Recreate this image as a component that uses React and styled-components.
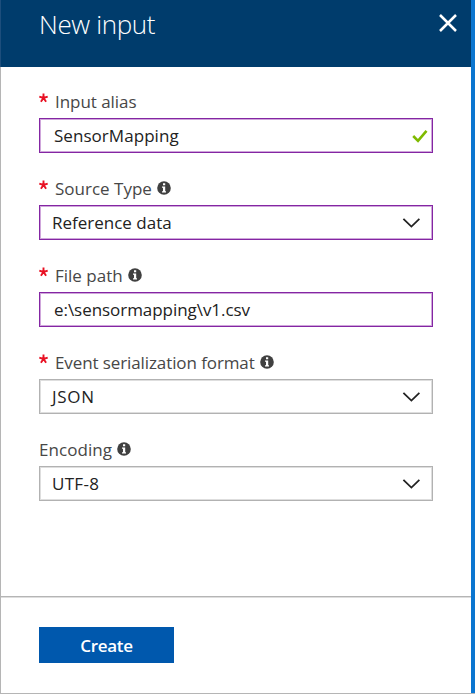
import React from "react";
import styled, { createGlobalStyle } from "styled-components";

const GlobalStyle = createGlobalStyle`
  * { box-sizing: border-box; }
  body {
    margin: 0;
    background: #fff;
    font-family: "Open Sans", "Noto Sans", sans-serif;
  }
`;

const Frame = styled.main`
  height: 694px;
  border-bottom: 1px solid #b5b5b5;
`;

const Blade = styled.section`
  display: flex;
  flex-direction: column;
  height: 693px;
  border-right: 4px solid #0b76d0;
  background: #fff;
`;

const Header = styled.header`
  display: flex;
  flex: none;
  justify-content: space-between;
  align-items: flex-start;
  height: 67px;
  padding: 6px 13px 0 38px;
  border-left: 1px solid #1d4e7c;
  background: #003c6c;
  color: #fff;
`;

const Title = styled.h1`
  margin: 0;
  font-size: 26px;
  line-height: 36px;
  font-weight: 300;
  letter-spacing: -0.35px;
`;

const CloseButton = styled.button`
  display: flex;
  margin: 7px 0 0;
  padding: 0;
  border: 0;
  background: none;
`;

const Form = styled.form`
  display: flex;
  flex: 1;
  flex-direction: column;
  border-left: 1px solid #b5b5b5;
`;

const Fields = styled.div`
  display: flex;
  flex: 1;
  flex-direction: column;
  gap: 17px;
  padding: 16px 38px 0;
`;

const Field = styled.div`
  display: flex;
  flex-direction: column;
  height: 70px;
`;

const Label = styled.div`
  display: flex;
  height: 35px;
  padding-top: 7px;
  color: #474747;
  font-size: 17px;
  line-height: 24px;
  white-space: nowrap;
`;

const LabelText = styled.span`
  letter-spacing: ${(p) => p.$tracking}px;
`;

const Required = styled.svg`
  flex: none;
  margin: 3px 7px 0 0;
`;

const InfoIcon = styled.svg`
  flex: none;
  margin: 4px 0 0 5px;
`;

const Control = styled.div`
  display: flex;
  justify-content: space-between;
  align-items: center;
  height: 35px;
  padding: 0 ${(p) => (p.$check ? 4 : 12)}px 0 ${(p) => (p.$select ? 12 : 14)}px;
  border: 1px solid ${(p) => (p.$edited ? "#8426a3" : "#b2b2b2")};
  box-shadow: inset 0 0 0 1px ${(p) => (p.$edited ? "#cfa6db" : "#dedede")};
  color: #222;
  font-size: 17px;
  line-height: 24px;
  white-space: nowrap;
`;

const Value = styled.span`
  letter-spacing: ${(p) => p.$tracking}px;
`;

const Footer = styled.footer`
  flex: none;
  height: 97px;
  padding: 30px 38px 0;
  border-top: 1px solid #b5b5b5;
  box-shadow: inset 0 1px 0 #dedede;
`;

const CreateButton = styled.button`
  display: block;
  width: 135px;
  height: 36px;
  padding: 1px 0 0;
  border: 0;
  background: #0058ad;
  color: #fff;
  font: 600 17px "Open Sans", sans-serif;
  letter-spacing: -0.3px;
`;

const Asterisk = () => (
  <Required width="9" height="11" viewBox="0 0 9 11" stroke="#e81123" strokeWidth="1.9">
    <path d="M4.5 0.5V5M0.3 3.6L4.5 5L8.7 3.6M1.9 8.7L4.5 5L7.1 8.7" fill="none" />
  </Required>
);

const Info = () => (
  <InfoIcon width="14" height="14" viewBox="0 0 14 14">
    <circle cx="7" cy="7" r="6.8" fill="#404040" />
    <path d="M6 2.3h2.2v2H6zM5 5.5h3.2v4.8H9v1.2H5v-1.2h1V6.7H5z" fill="#fff" />
  </InfoIcon>
);

const Chevron = () => (
  <svg width="18" height="11" viewBox="0 0 18 11" fill="none" stroke="#222" strokeWidth="1.8">
    <path d="M1.4 1.8L9.4 9.6L17.4 1.8" />
  </svg>
);

const Check = () => (
  <svg width="16" height="14" viewBox="0 0 16 14" fill="none" stroke="#7fba00" strokeWidth="2.6">
    <path d="M1.2 7L6 11.8L14.5 1.8" />
  </svg>
);

const fields = [
  { label: "Input alias", value: "SensorMapping", required: true, edited: true, check: true, lt: -0.05, vt: 0.05 },
  { label: "Source Type", value: "Reference data", required: true, edited: true, info: true, select: true, lt: 0, vt: 0 },
  { label: "File path", value: "e:\\sensormapping\\v1.csv", required: true, edited: true, info: true, lt: 0, vt: -0.05 },
  { label: "Event serialization format", value: "JSON", required: true, info: true, select: true, lt: -0.1, vt: 0.7 },
  { label: "Encoding", value: "UTF-8", info: true, select: true, lt: 0.05, vt: 0.3 },
];

export default function App() {
  return (
    <>
      <GlobalStyle />
      <Frame>
        <Blade>
          <Header>
            <Title>New input</Title>
            <CloseButton type="button" aria-label="Close">
              <svg width="20" height="20" viewBox="0 0 20 20" stroke="#fff" strokeWidth="2.5">
                <path d="M2 2L18 18M18 2L2 18" />
              </svg>
            </CloseButton>
          </Header>
          <Form>
            <Fields>
              {fields.map((f) => (
                <Field key={f.label}>
                  <Label>
                    {f.required && <Asterisk />}
                    <LabelText $tracking={f.lt}>{f.label}</LabelText>
                    {f.info && <Info />}
                  </Label>
                  <Control $edited={f.edited} $select={f.select} $check={f.check}>
                    <Value $tracking={f.vt}>{f.value}</Value>
                    {f.select && <Chevron />}
                    {f.check && <Check />}
                  </Control>
                </Field>
              ))}
            </Fields>
            <Footer>
              <CreateButton type="button">Create</CreateButton>
            </Footer>
          </Form>
        </Blade>
      </Frame>
    </>
  );
}
